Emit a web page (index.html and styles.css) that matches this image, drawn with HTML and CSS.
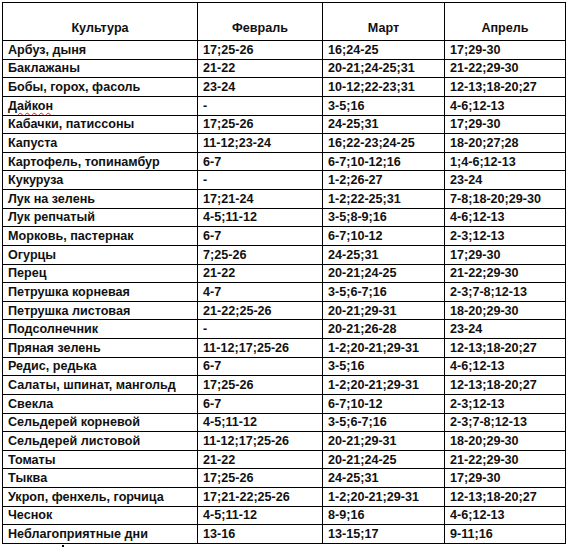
FILE: index.html
```html
<!DOCTYPE html>
<html lang="ru">
<head>
<meta charset="utf-8">
<link rel="stylesheet" href="styles.css">
</head>
<body>
<table class="cal">
<colgroup><col class="c1"><col class="c2"><col class="c3"><col class="c4"></colgroup>
<thead>
<tr class="hrow"><th>Культура</th><th>Февраль</th><th>Март</th><th>Апрель</th></tr>
</thead>
<tbody>
<tr><td>Арбуз, дыня</td><td>17;25-26</td><td>16;24-25</td><td>17;29-30</td></tr>
<tr><td>Баклажаны</td><td>21-22</td><td>20-21;24-25;31</td><td>21-22;29-30</td></tr>
<tr><td>Бобы, горох, фасоль</td><td>23-24</td><td>10-12;22-23;31</td><td>12-13;18-20;27</td></tr>
<tr><td><span class="spell">Дайкон</span></td><td>-</td><td>3-5;16</td><td>4-6;12-13</td></tr>
<tr><td>Кабачки, патиссоны</td><td>17;25-26</td><td>24-25;31</td><td>17;29-30</td></tr>
<tr><td>Капуста</td><td>11-12;23-24</td><td>16;22-23;24-25</td><td>18-20;27;28</td></tr>
<tr><td>Картофель, топинамбур</td><td>6-7</td><td>6-7;10-12;16</td><td>1;4-6;12-13</td></tr>
<tr><td>Кукуруза</td><td>-</td><td>1-2;26-27</td><td>23-24</td></tr>
<tr><td>Лук на зелень</td><td>17;21-24</td><td>1-2;22-25;31</td><td>7-8;18-20;29-30</td></tr>
<tr><td>Лук репчатый</td><td>4-5;11-12</td><td>3-5;8-9;16</td><td>4-6;12-13</td></tr>
<tr><td>Морковь, пастернак</td><td>6-7</td><td>6-7;10-12</td><td>2-3;12-13</td></tr>
<tr><td>Огурцы</td><td>7;25-26</td><td>24-25;31</td><td>17;29-30</td></tr>
<tr><td>Перец</td><td>21-22</td><td>20-21;24-25</td><td>21-22;29-30</td></tr>
<tr><td>Петрушка корневая</td><td>4-7</td><td>3-5;6-7;16</td><td>2-3;7-8;12-13</td></tr>
<tr><td>Петрушка листовая</td><td>21-22;25-26</td><td>20-21;29-31</td><td>18-20;29-30</td></tr>
<tr><td>Подсолнечник</td><td>-</td><td>20-21;26-28</td><td>23-24</td></tr>
<tr><td>Пряная зелень</td><td>11-12;17;25-26</td><td>1-2;20-21;29-31</td><td>12-13;18-20;27</td></tr>
<tr><td>Редис, редька</td><td>6-7</td><td>3-5;16</td><td>4-6;12-13</td></tr>
<tr><td>Салаты, шпинат, мангольд</td><td>17;25-26</td><td>1-2;20-21;29-31</td><td>12-13;18-20;27</td></tr>
<tr><td>Свекла</td><td>6-7</td><td>6-7;10-12</td><td>2-3;12-13</td></tr>
<tr><td>Сельдерей корневой</td><td>4-5;11-12</td><td>3-5;6-7;16</td><td>2-3;7-8;12-13</td></tr>
<tr><td>Сельдерей листовой</td><td>11-12;17;25-26</td><td>20-21;29-31</td><td>18-20;29-30</td></tr>
<tr><td>Томаты</td><td>21-22</td><td>20-21;24-25</td><td>21-22;29-30</td></tr>
<tr><td>Тыква</td><td>17;25-26</td><td>24-25;31</td><td>17;29-30</td></tr>
<tr><td>Укроп, фенхель, горчица</td><td>17;21-22;25-26</td><td>1-2;20-21;29-31</td><td>12-13;18-20;27</td></tr>
<tr><td>Чеснок</td><td>4-5;11-12</td><td>8-9;16</td><td>4-6;12-13</td></tr>
<tr><td>Неблагоприятные дни</td><td>13-16</td><td>13-15;17</td><td>9-11;16</td></tr>
</tbody>
</table>
<div class="tick"></div>
</body>
</html>
```
FILE: styles.css
```css
html, body {
  margin: 0;
  padding: 0;
  background: #fff;
}
body {
  padding: 2px 0 0 2px;
  font-family: "Liberation Sans", Arial, sans-serif;
  font-weight: bold;
  font-size: 12.6px;
  color: #111;
}
.cal {
  border-collapse: collapse;
  table-layout: fixed;
  width: 563px;
}
.c1 { width: 195px; }
.c2 { width: 125px; }
.c3 { width: 122px; }
.c4 { width: 121px; }
.cal tr { height: 18.63px; }
.cal tr.hrow { height: 38px; }
.cal th, .cal td {
  border: 1px solid #000;
  padding: 0 0 0 5px;
  white-space: nowrap;
  overflow: hidden;
  line-height: 14px;
}
.cal th {
  text-align: center;
  vertical-align: bottom;
  padding: 0 0 5px 0;
}
.cal td {
  vertical-align: middle;
  text-align: left;
}
.spell {
  text-decoration: underline wavy #d22;
  text-decoration-thickness: 1px;
  text-underline-offset: 2px;
}
.tick {
  margin: 1px 0 0 60px;
  width: 2px;
  height: 4px;
  background: #000;
}
```
